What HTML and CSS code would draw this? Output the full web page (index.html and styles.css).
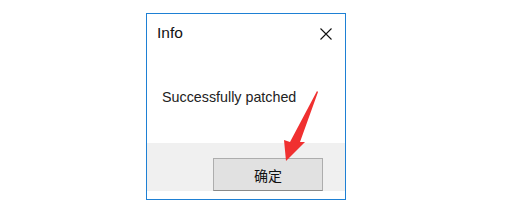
FILE: index.html
```
<!DOCTYPE html>
<html lang="en">
<head>
  <meta charset="UTF-8" />
  <title>Info</title>
  <link rel="stylesheet" href="styles.css">
</head>
<body>
  <div class="dialog">
    <div class="titlebar">
      <span class="title">Info</span>
      <svg class="close" width="12" height="12" viewBox="0 0 12 12">
        <path d="M0.5 0.5 L11.5 11.5 M11.5 0.5 L0.5 11.5" stroke="#111" stroke-width="1.1" fill="none"/>
      </svg>
    </div>
    <div class="content">
      <p class="message">Successfully patched</p>
    </div>
    <div class="footer">
      <button class="ok">确定</button>
    </div>
  </div>

  <!-- red annotation arrow -->
  <svg class="arrow" width="512" height="208" viewBox="0 0 512 208">
    <path d="M317 91 L318 92 L300 142 L305 142 L286 161 L284 140 L290 142 Z" fill="#f03030"/>
  </svg>
</body>
</html>
```
FILE: styles.css
```
body {
  margin: 0;
  background: #fff;
  font-family: "Liberation Sans", Arial, sans-serif;
  position: relative;
  width: 512px;
  height: 208px;
  overflow: hidden;
}

.dialog {
  margin: 13px 0 0 146px;
  width: 198px;
  height: 185px;
  border: 1px solid #1e80d4;
  background: #fff;
  display: flex;
  flex-direction: column;
}

.titlebar {
  display: flex;
  align-items: center;
  justify-content: space-between;
  height: 38px;
  padding: 0 13px 0 10px;
}

.title {
  font-size: 15.5px;
  color: #111;
}

.close {
  margin-top: 1px;
}

.content {
  flex: 1;
  padding: 0 0 0 15px;
}

.message {
  margin: 37px 0 0;
  font-size: 14.3px;
  color: #222;
}

.footer {
  height: 48px;
  background: #f0f0f0;
  margin-bottom: 8px;
  display: flex;
  justify-content: flex-end;
  align-items: flex-end;
  padding-right: 22px;
}

.ok {
  width: 110px;
  height: 33px;
  margin: 0;
  background: #e1e1e1;
  border: 1px solid #adadad;
  border-bottom-color: #8a8a8a;
  font-family: "Noto Sans CJK SC", sans-serif;
  font-size: 14px;
  color: #111;
  padding: 0;
}

.arrow {
  position: absolute;
  left: 0;
  top: 0;
}
```
